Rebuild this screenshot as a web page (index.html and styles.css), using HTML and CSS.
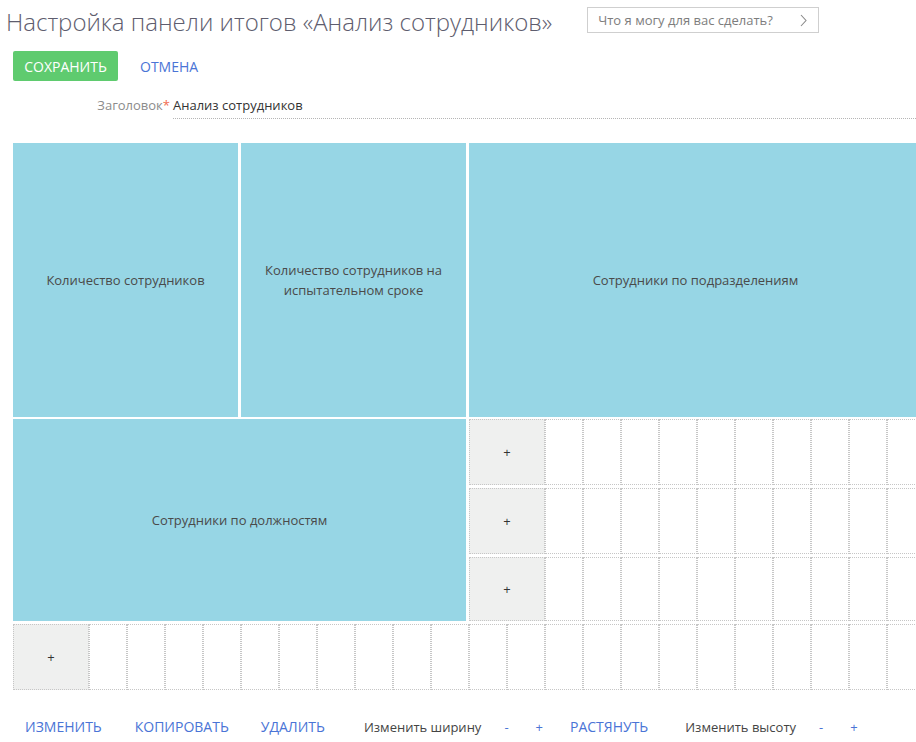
FILE: index.html
```html
<!DOCTYPE html>
<html lang="ru">
<head>
<meta charset="utf-8">
<title>Настройка панели итогов</title>
<link rel="stylesheet" href="styles.css">
</head>
<body>
<div class="page">
  <header class="header">
    <h1 class="title">Настройка панели итогов «Анализ сотрудников»</h1>
    <div class="search">
      <span class="search-text">Что я могу для вас сделать?</span>
      <svg class="chevron" width="7" height="13" viewBox="0 0 7 13"><path d="M1 1 L6 6.5 L1 12" fill="none" stroke="#8a8a8a" stroke-width="1.1"/></svg>
    </div>
  </header>

  <div class="actions">
    <button class="btn-save">СОХРАНИТЬ</button>
    <button class="btn-link">ОТМЕНА</button>
  </div>

  <div class="field">
    <span class="field-label">Заголовок<span class="req">*</span></span>
    <span class="field-value">Анализ сотрудников</span>
  </div>

  <div class="grid">
    <div class="tile t1"><span>Количество сотрудников</span></div>
    <div class="tile t2"><span>Количество сотрудников на испытательном сроке</span></div>
    <div class="tile t3"><span>Сотрудники по подразделениям</span></div>
    <div class="tile t4"><span>Сотрудники по должностям</span></div>
    <div class="add a1">+</div>
    <div class="add a2">+</div>
    <div class="add a3">+</div>
    <div class="add a4">+</div>
    <div class="cell"></div><div class="cell"></div><div class="cell"></div><div class="cell"></div><div class="cell"></div>
    <div class="cell"></div><div class="cell"></div><div class="cell"></div><div class="cell"></div><div class="cell"></div>
    <div class="cell"></div><div class="cell"></div><div class="cell"></div><div class="cell"></div><div class="cell"></div>
    <div class="cell"></div><div class="cell"></div><div class="cell"></div><div class="cell"></div><div class="cell"></div>
    <div class="cell"></div><div class="cell"></div><div class="cell"></div><div class="cell"></div><div class="cell"></div>
    <div class="cell"></div><div class="cell"></div><div class="cell"></div><div class="cell"></div><div class="cell"></div>
    <div class="cell"></div><div class="cell"></div><div class="cell"></div><div class="cell"></div><div class="cell"></div>
    <div class="cell"></div><div class="cell"></div><div class="cell"></div><div class="cell"></div><div class="cell"></div>
    <div class="cell"></div><div class="cell"></div><div class="cell"></div><div class="cell"></div><div class="cell"></div>
    <div class="cell"></div><div class="cell"></div><div class="cell"></div><div class="cell"></div><div class="cell"></div>
    <div class="cell"></div><div class="cell"></div>
  </div>

  <div class="toolbar">
    <a class="tool-link l-edit">ИЗМЕНИТЬ</a>
    <a class="tool-link l-copy">КОПИРОВАТЬ</a>
    <a class="tool-link l-del">УДАЛИТЬ</a>
    <span class="tool-label l-width">Изменить ширину</span>
    <a class="tool-sign s-minus">-</a>
    <a class="tool-sign s-plus">+</a>
    <a class="tool-link l-stretch">РАСТЯНУТЬ</a>
    <span class="tool-label l-height">Изменить высоту</span>
    <a class="tool-sign s-minus">-</a>
    <a class="tool-sign s-plus">+</a>
  </div>
</div>
</body>
</html>
```

FILE: styles.css
```css
html, body {
  margin: 0;
  padding: 0;
  overflow: hidden;
  background: #ffffff;
}

body {
  font-family: "Open Sans", "Liberation Sans", sans-serif;
  color: #444444;
  width: 916px;
  height: 742px;
}

.page {
  width: 930px;
}

.header {
  display: flex;
  align-items: flex-start;
  padding: 5px 0 0 6px;
  height: 51px;
  box-sizing: border-box;
}

.title {
  margin: 0;
  font-weight: 300;
  font-size: 24px;
  line-height: 34px;
  color: #5e5d6e;
  white-space: nowrap;
}

.search {
  margin: 2px 0 0 35px;
  width: 232px;
  height: 26px;
  box-sizing: border-box;
  border: 1px solid #cfcfcf;
  display: flex;
  align-items: center;
  padding: 0 11px 0 10px;
  font-size: 13px;
  color: #7d7d7d;
}

.search-text {
  flex: 1;
}

.chevron {
  display: block;
}

.actions {
  display: flex;
  align-items: center;
  padding-left: 13px;
  height: 30px;
}

.btn-save {
  height: 30px;
  width: 105px;
  border: none;
  border-radius: 2px;
  background: #5fcb6f;
  color: #ffffff;
  font-family: inherit;
  font-size: 14px;
  padding: 0;
}

.btn-link {
  border: none;
  background: none;
  font-family: inherit;
  font-size: 14px;
  color: #4a74d6;
  padding: 0;
  margin-left: 22px;
}

.field {
  display: flex;
  align-items: baseline;
  margin-top: 15px;
  height: 24px;
  font-size: 13px;
}

.field-label {
  width: 170px;
  text-align: right;
  color: #8c8c8c;
  flex: none;
}

.req {
  color: #f26b4f;
}

.field-value {
  margin-left: 3px;
  flex: 1;
  color: #333333;
  border-bottom: 1px dotted #b5b5b5;
  padding-bottom: 4px;
}

.grid {
  margin: 23px 0 0 13px;
  display: grid;
  grid-template-columns: repeat(24, 38px);
  grid-template-rows: repeat(6, 66px) 64px 66px;
  row-gap: 3px;
}

.tile {
  background: #97d6e5;
  margin-right: 3px;
  display: flex;
  align-items: center;
  justify-content: center;
  text-align: center;
  font-size: 13px;
  line-height: 20px;
  color: #4a4a4a;
  padding: 0 20px;
}

.t1 { grid-column: 1 / 7; grid-row: 1 / 5; margin-bottom: -1px; }
.t2 { grid-column: 7 / 13; grid-row: 1 / 5; margin-bottom: -1px; }
.t3 { grid-column: 13 / 25; grid-row: 1 / 5; margin-bottom: -1px; }
.t4 { grid-column: 1 / 13; grid-row: 5 / 8; }

.add {
  background: #eff0ef;
  border: 1px dotted #c6c6c6;
  display: flex;
  align-items: center;
  justify-content: center;
  font-size: 13px;
  color: #333333;
}

.a1 { grid-column: 13 / 15; grid-row: 5; }
.a2 { grid-column: 13 / 15; grid-row: 6; }
.a3 { grid-column: 13 / 15; grid-row: 7; }
.a4 { grid-column: 1 / 3; grid-row: 8; }

.cell {
  border: 1px dotted #c6c6c6;
}

.toolbar {
  display: flex;
  align-items: baseline;
  margin-top: 27px;
  padding-left: 25px;
  font-size: 14px;
}

.tool-link {
  color: #4a74d6;
}

.tool-label {
  color: #444444;
  font-size: 13px;
}

.tool-sign {
  color: #4a74d6;
  font-size: 13px;
}

.l-copy { margin-left: 33px; }
.l-del { margin-left: 32px; }
.l-width { margin-left: 39px; }
.l-width + .s-minus { margin-left: 23px; }
.s-plus { margin-left: 27px; }
.l-stretch { margin-left: 27px; }
.l-height { margin-left: 37px; }
.l-height + .s-minus { margin-left: 23px; }
```
